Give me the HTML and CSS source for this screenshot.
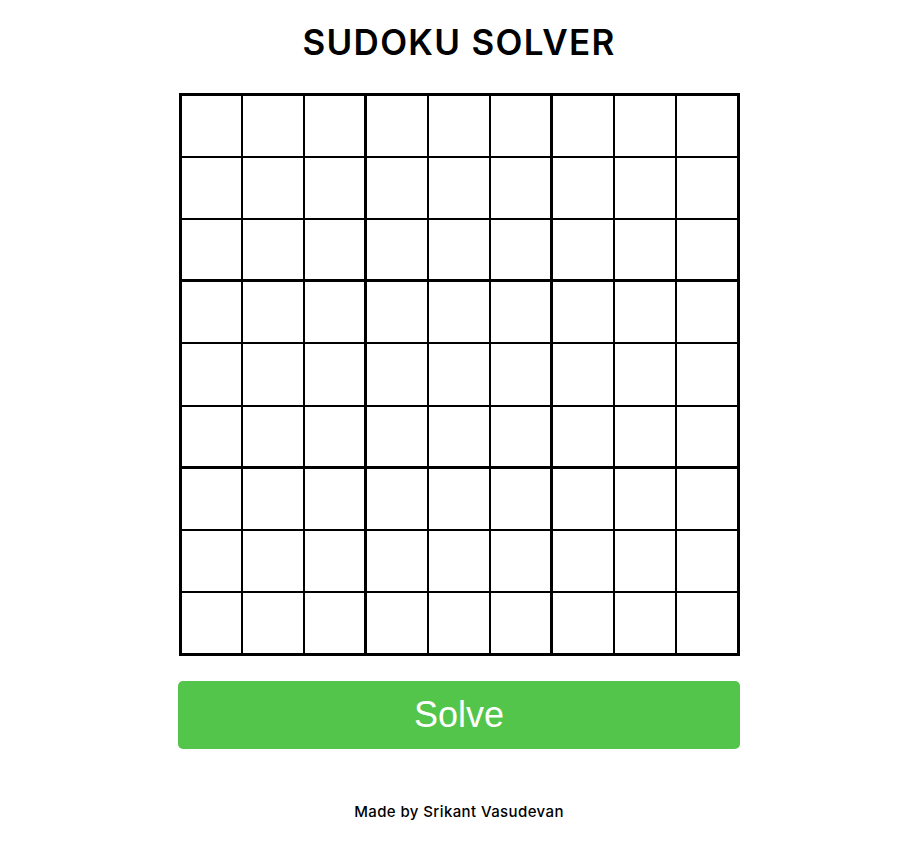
FILE: index.html
```html
<!DOCTYPE html>
<html lang="en">
<head>
<meta charset="utf-8">
<title>Sudoku Solver</title>
<link rel="stylesheet" href="styles.css">
</head>
<body>
<main class="app">
  <h1 class="title">SUDOKU SOLVER</h1>
  <div class="board" id="board">
    <input class="cell" maxlength="1"><input class="cell" maxlength="1"><input class="cell" maxlength="1"><input class="cell" maxlength="1"><input class="cell" maxlength="1"><input class="cell" maxlength="1"><input class="cell" maxlength="1"><input class="cell" maxlength="1"><input class="cell" maxlength="1">
    <input class="cell" maxlength="1"><input class="cell" maxlength="1"><input class="cell" maxlength="1"><input class="cell" maxlength="1"><input class="cell" maxlength="1"><input class="cell" maxlength="1"><input class="cell" maxlength="1"><input class="cell" maxlength="1"><input class="cell" maxlength="1">
    <input class="cell" maxlength="1"><input class="cell" maxlength="1"><input class="cell" maxlength="1"><input class="cell" maxlength="1"><input class="cell" maxlength="1"><input class="cell" maxlength="1"><input class="cell" maxlength="1"><input class="cell" maxlength="1"><input class="cell" maxlength="1">
    <input class="cell" maxlength="1"><input class="cell" maxlength="1"><input class="cell" maxlength="1"><input class="cell" maxlength="1"><input class="cell" maxlength="1"><input class="cell" maxlength="1"><input class="cell" maxlength="1"><input class="cell" maxlength="1"><input class="cell" maxlength="1">
    <input class="cell" maxlength="1"><input class="cell" maxlength="1"><input class="cell" maxlength="1"><input class="cell" maxlength="1"><input class="cell" maxlength="1"><input class="cell" maxlength="1"><input class="cell" maxlength="1"><input class="cell" maxlength="1"><input class="cell" maxlength="1">
    <input class="cell" maxlength="1"><input class="cell" maxlength="1"><input class="cell" maxlength="1"><input class="cell" maxlength="1"><input class="cell" maxlength="1"><input class="cell" maxlength="1"><input class="cell" maxlength="1"><input class="cell" maxlength="1"><input class="cell" maxlength="1">
    <input class="cell" maxlength="1"><input class="cell" maxlength="1"><input class="cell" maxlength="1"><input class="cell" maxlength="1"><input class="cell" maxlength="1"><input class="cell" maxlength="1"><input class="cell" maxlength="1"><input class="cell" maxlength="1"><input class="cell" maxlength="1">
    <input class="cell" maxlength="1"><input class="cell" maxlength="1"><input class="cell" maxlength="1"><input class="cell" maxlength="1"><input class="cell" maxlength="1"><input class="cell" maxlength="1"><input class="cell" maxlength="1"><input class="cell" maxlength="1"><input class="cell" maxlength="1">
    <input class="cell" maxlength="1"><input class="cell" maxlength="1"><input class="cell" maxlength="1"><input class="cell" maxlength="1"><input class="cell" maxlength="1"><input class="cell" maxlength="1"><input class="cell" maxlength="1"><input class="cell" maxlength="1"><input class="cell" maxlength="1">
  </div>
  <button class="solve" type="button">Solve</button>
  <footer class="credit">Made by Srikant Vasudevan</footer>
</main>
</body>
</html>
```

FILE: styles.css
```css
* {
  box-sizing: border-box;
}

html, body {
  margin: 0;
  background: #ffffff;
}

body {
  padding-left: 7px;
  font-family: Inter, "Noto Sans", sans-serif;
  color: #000000;
}

.app {
  display: flex;
  flex-direction: column;
  align-items: center;
}

.title {
  margin: 22px 0 0;
  font-size: 35px;
  line-height: 40px;
  font-weight: 600;
  letter-spacing: 1.3px;
}

.board {
  margin-top: 31px;
  width: 561px;
  height: 563px;
  border: 3px solid #000000;
  background: #000000;
  display: grid;
  grid-template-columns: repeat(9, 1fr);
  grid-template-rows: repeat(9, 1fr);
  gap: 2px;
}

.cell {
  display: block;
  width: auto;
  min-width: 0;
  height: auto;
  border: none;
  margin: 0;
  padding: 0;
  background: #ffffff;
  font-family: inherit;
  font-size: 28px;
  text-align: center;
  outline: none;
}

.cell:nth-child(9n+3),
.cell:nth-child(9n+6) {
  margin-right: 1px;
}

.cell:nth-child(n+19):nth-child(-n+27),
.cell:nth-child(n+46):nth-child(-n+54) {
  margin-bottom: 1px;
}

.solve {
  margin-top: 25px;
  width: 562px;
  height: 68px;
  border: none;
  border-radius: 5px;
  background: #52c54a;
  color: #ffffff;
  font-family: "Liberation Sans", Arial, sans-serif;
  font-size: 36px;
  cursor: pointer;
}

.credit {
  margin-top: 53px;
  font-size: 15px;
  line-height: 20px;
  font-weight: 500;
  letter-spacing: 0.4px;
}
```
